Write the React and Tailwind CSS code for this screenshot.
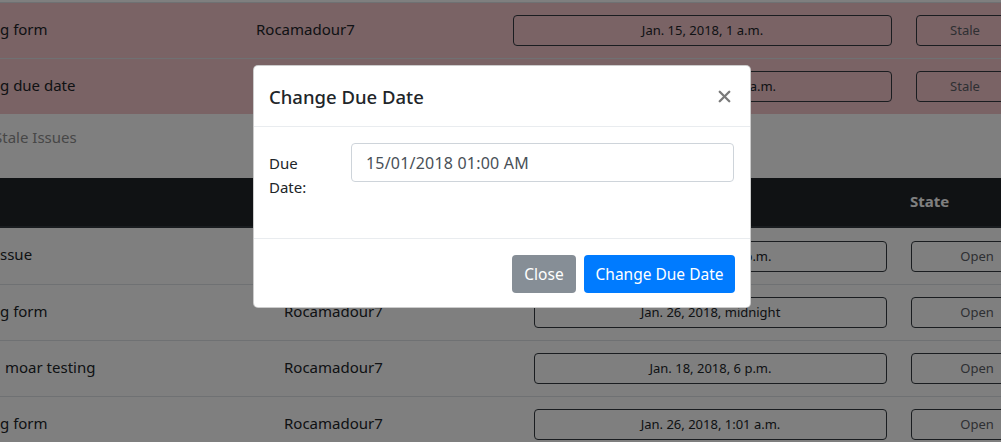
import { X } from 'lucide-react'

const staleRows = [
  { title: 'g form', author: 'Rocamadour7', due: 'Jan. 15, 2018, 1 a.m.', state: 'Stale' },
  { title: 'g due date', author: 'Rocamadour7', due: 'Jan. 20, 2018, 10:15 a.m.', state: 'Stale' },
]

const openRows = [
  { title: 'ssue', author: 'Rocamadour7', due: 'Jan. 18, 2018, 2 p.m.', state: 'Open' },
  { title: 'g form', author: 'Rocamadour7', due: 'Jan. 26, 2018, midnight', state: 'Open' },
  { title: 'moar testing', titleClass: 'pl-[5px]', author: 'Rocamadour7', due: 'Jan. 18, 2018, 6 p.m.', state: 'Open' },
  { title: 'g form', author: 'Rocamadour7', due: 'Jan. 26, 2018, 1:01 a.m.', state: 'Open' },
]

function OutlineButton({ children, className = '' }) {
  return (
    <button
      type="button"
      className={`h-[31px] w-full rounded-[4px] border border-[#343a40] pb-[1px] text-[13px] leading-[20px] ${className}`}
    >
      {children}
    </button>
  )
}

function DueDateModal() {
  return (
    <div className="absolute top-[65px] left-[253px] w-[498px] overflow-hidden rounded-[5px] border border-black/20 bg-white">
      <div className="flex items-start border-b border-[#e9ecef] p-[15px]">
        <h5 className="pt-[1px] text-[18.5px] leading-[29px] font-medium text-[#212529]">Change Due Date</h5>
        <button type="button" className="mr-[1px] ml-auto flex h-[30px] w-[20px] items-center justify-center text-[#7a7a7a]">
          <X size={19} strokeWidth={3} />
        </button>
      </div>
      <div className="px-[15px] pt-[16px] pb-[39px]">
        <div className="flex gap-[30px]">
          <label className="w-[53px] shrink-0 pt-[8px] leading-[24px] text-[#212529]">Due Date:</label>
          <input
            readOnly
            value="15/01/2018 01:00 AM"
            className="-ml-[1px] h-[39px] w-[383px] rounded-[4px] border border-[#ced4da] px-[14px] text-[16px] tracking-[0.2px] text-[#495057] outline-none"
          />
        </div>
      </div>
      <div className="flex justify-end gap-[8px] border-t border-[#e9ecef] px-[15px] pt-[16px] pb-[14px]">
        <button type="button" className="h-[38px] w-[64px] rounded-[4px] bg-[#868e96] pb-[1px] text-[15.5px] text-white">
          Close
        </button>
        <button type="button" className="h-[38px] w-[151px] rounded-[4px] bg-[#007bff] pb-[1px] text-[15.5px] text-white">
          Change Due Date
        </button>
      </div>
    </div>
  )
}

export default function App() {
  return (
    <div className="relative h-[442px] w-[1001px] overflow-hidden bg-white font-['Noto_Sans',sans-serif] text-[15px] leading-[24px] text-[#212529]">
      {/* stale issues table */}
      <div className="pt-[2px]">
        {staleRows.map((row) => (
          <div key={row.due} className="flex h-[56px] items-center border-t border-[#dee2e6] bg-[#f5c6cb]">
            <div className="w-[244px] shrink-0 pb-[4px] whitespace-nowrap">{row.title}</div>
            <div className="w-[257px] shrink-0 px-3 pb-[4px]">{row.author}</div>
            <div className="w-[403px] shrink-0 px-3">
              <OutlineButton>{row.due}</OutlineButton>
            </div>
            <div className="w-[122px] shrink-0 px-3">
              <OutlineButton className="text-[#5c6066]">{row.state}</OutlineButton>
            </div>
          </div>
        ))}
      </div>

      <div className="-ml-[6px] pt-[11px] pb-[29px] text-[#8e8e8e]">Stale Issues</div>

      {/* open issues table */}
      <div className="flex h-[50px] items-center border-b-2 border-[#32383e] bg-[#212529] font-bold text-white">
        <div className="w-[272px] shrink-0" />
        <div className="w-[250px] shrink-0 px-3">Author</div>
        <div className="w-[376px] shrink-0 px-3">Due Date</div>
        <div className="w-[150px] shrink-0 px-3 pb-[2px]">State</div>
      </div>
      {openRows.map((row, i) => (
        <div key={row.due} className={`flex h-[56px] items-center ${i > 0 ? 'border-t border-[#dee2e6]' : ''}`}>
          <div className={`w-[272px] shrink-0 pb-[4px] whitespace-nowrap ${row.titleClass || ''}`}>{row.title}</div>
          <div className="w-[250px] shrink-0 px-3 pb-[4px]">{row.author}</div>
          <div className="w-[377px] shrink-0 px-3">
            <OutlineButton>{row.due}</OutlineButton>
          </div>
          <div className="w-[156px] shrink-0 px-3">
            <OutlineButton className="text-[#5c6066]">{row.state}</OutlineButton>
          </div>
        </div>
      ))}

      <div className="absolute inset-0 bg-black/50" />
      <DueDateModal />
    </div>
  )
}
